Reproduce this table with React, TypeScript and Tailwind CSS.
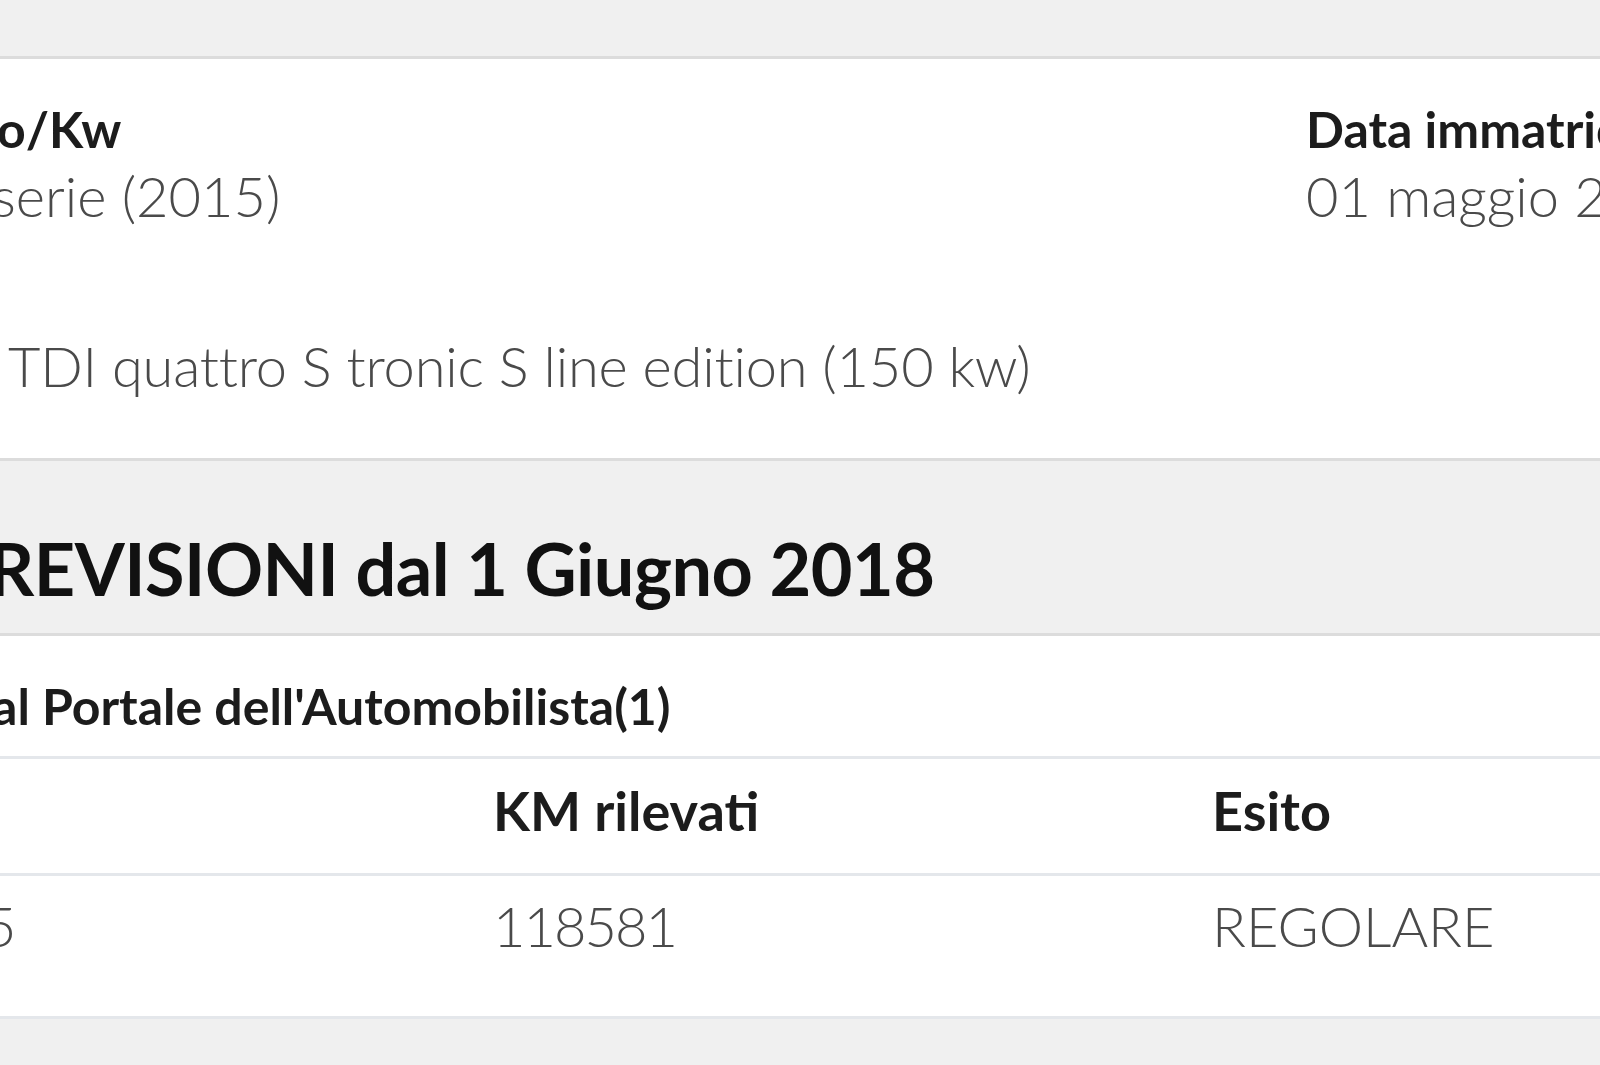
export default function App() {
  return (
    <main className="w-[1600px] h-[1065px] overflow-hidden bg-[#f0f0f0] font-[Lato,sans-serif]">
      <div className="h-[56px]" />

      <section className="h-[405px] bg-white border-y-[3px] border-[#dcdcdc] pt-[40px] whitespace-nowrap">
        <div className="flex">
          <div className="w-[1306px] shrink-0">
            <p className="-ml-[3px] text-[50px] leading-[1.2] font-bold text-[#1c1c1c]">o/Kw</p>
            <p className="-ml-[8px] mt-[3px] text-[56px] leading-[1.2] font-light text-[#4a4a4a]">serie (2015)</p>
          </div>
          <div className="shrink-0">
            <p className="text-[50px] leading-[1.2] font-bold text-[#1c1c1c]">Data immatricolazione</p>
            <p className="mt-[3px] text-[56px] leading-[1.2] font-light text-[#4a4a4a]">01 maggio 2015</p>
          </div>
        </div>
        <p className="mt-[103px] ml-[8px] text-[56px] leading-[1.2] font-light text-[#4a4a4a] tracking-[-0.2px]">
          TDI quattro S tronic S line edition (150 kw)
        </p>
      </section>

      <section className="h-[175px] border-b-[3px] border-[#dcdcdc] pt-[64px] whitespace-nowrap">
        <h2 className="-ml-[12px] text-[72px] leading-[1.2] font-bold text-[#111] tracking-[-0.5px]">REVISIONI dal 1 Giugno 2018</h2>
      </section>

      <section className="bg-white whitespace-nowrap">
        <div className="h-[123px] border-b-[3px] border-[#e4e7eb] pt-[40px]">
          <p className="-ml-[8px] text-[50px] leading-[1.2] font-bold text-[#1c1c1c]">al Portale dell'Automobilista(1)</p>
        </div>
        <div className="flex h-[117px] border-b-[3px] border-[#e4e7eb] pt-[20px] text-[54px] leading-[1.2] font-bold text-[#1c1c1c]">
          <div className="w-[493px] shrink-0" />
          <div className="w-[719px] shrink-0">KM rilevati</div>
          <div className="flex-1">Esito</div>
        </div>
        <div className="flex h-[143px] border-b-[3px] border-[#e4e7eb] pt-[16px] text-[56px] leading-[1.2] font-light text-[#4a4a4a]">
          <div className="w-[493px] shrink-0">
            <span className="-ml-[16px] inline-block">5</span>
          </div>
          <div className="w-[719px] shrink-0 tracking-[-2px]">118581</div>
          <div className="flex-1">REGOLARE</div>
        </div>
      </section>
    </main>
  );
}
